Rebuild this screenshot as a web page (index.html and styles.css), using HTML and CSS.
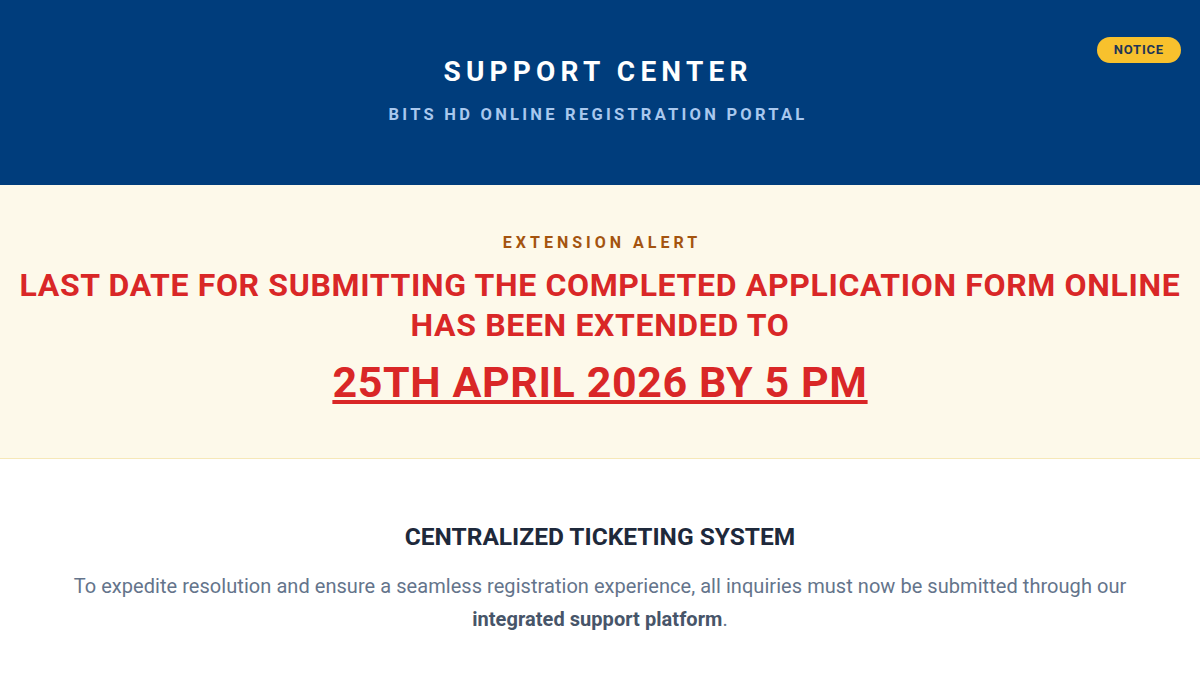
FILE: index.html
```html
<!DOCTYPE html>
<html lang="en">
<head>
    <meta charset="UTF-8">
    <meta name="viewport" content="width=device-width, initial-scale=1.0">
    <title>Support Center</title>
    <link rel="stylesheet" href="styles.css">
</head>
<body>
    <header class="site-header">
        <span class="notice-badge">NOTICE</span>
        <h1 class="site-title">SUPPORT CENTER</h1>
        <p class="site-subtitle">BITS HD ONLINE REGISTRATION PORTAL</p>
    </header>

    <section class="alert-banner">
        <p class="alert-label">EXTENSION ALERT</p>
        <h2 class="alert-heading">LAST DATE FOR SUBMITTING THE COMPLETED APPLICATION FORM ONLINE HAS BEEN EXTENDED TO</h2>
        <p class="alert-date">25TH APRIL 2026 BY 5 PM</p>
    </section>

    <main class="content">
        <h3 class="content-title">CENTRALIZED TICKETING SYSTEM</h3>
        <p class="content-text">To expedite resolution and ensure a seamless registration experience, all inquiries must now be submitted through our <strong>integrated support platform</strong>.</p>
    </main>
</body>
</html>
```

FILE: styles.css
```css
:root {
    --navy: #003d7c;
    --sky: #a9c8ee;
    --badge: #f8c12d;
    --cream: #fdf9ea;
    --cream-border: #f6e8b8;
    --amber: #a4540f;
    --red: #d92727;
    --ink: #1e293b;
    --muted: #64748b;
    --muted-strong: #475569;
}

* {
    box-sizing: border-box;
}

body {
    margin: 0;
    font-family: Roboto, 'Liberation Sans', sans-serif;
    background-color: #fff;
    color: var(--ink);
}

/* ヘッダー */
.site-header {
    position: relative;
    height: 185px;
    background-color: var(--navy);
    display: flex;
    flex-direction: column;
    align-items: center;
    padding-top: 56px;
    text-align: center;
}

.site-title {
    margin: 0 0 0 -4px;
    color: #fff;
    font-size: 28px;
    font-weight: 700;
    letter-spacing: 5.2px;
    line-height: 32px;
}

.site-subtitle {
    margin: 17px 0 0 -4px;
    color: var(--sky);
    font-size: 16.5px;
    font-weight: 700;
    letter-spacing: 3.25px;
    line-height: 20px;
}

.notice-badge {
    position: absolute;
    top: 37px;
    right: 19px;
    padding: 0 17px;
    height: 26px;
    line-height: 26px;
    border-radius: 13px;
    background-color: var(--badge);
    color: #1f3556;
    font-size: 13px;
    font-weight: 700;
    letter-spacing: 0.8px;
}

/* 延長のお知らせ */
.alert-banner {
    background-color: var(--cream);
    border-bottom: 1px solid var(--cream-border);
    padding: 48px 10px 51px;
    text-align: center;
}

.alert-label {
    margin: 0;
    color: var(--amber);
    font-size: 16px;
    font-weight: 700;
    letter-spacing: 4px;
    line-height: 20px;
    padding-left: 4px;
}

.alert-heading {
    margin: 12px 0 0;
    color: var(--red);
    font-size: 32px;
    font-weight: 700;
    letter-spacing: 0.65px;
    line-height: 40px;
}

.alert-date {
    margin: 12px 0 0;
    color: var(--red);
    font-size: 43px;
    font-weight: 700;
    letter-spacing: 0.6px;
    line-height: 50px;
    text-decoration: underline;
    text-decoration-thickness: 4px;
    text-underline-offset: 3px;
}

/* 本文 */
.content {
    padding: 63px 20px 0;
    text-align: center;
}

.content-title {
    margin: 0;
    color: var(--ink);
    font-size: 24.5px;
    font-weight: 700;
    line-height: 30px;
}

.content-text {
    max-width: 1080px;
    margin: 18px auto 0;
    color: var(--muted);
    font-size: 20px;
    letter-spacing: 0.05px;
    line-height: 33px;
}

.content-text strong {
    color: var(--muted-strong);
}
```
